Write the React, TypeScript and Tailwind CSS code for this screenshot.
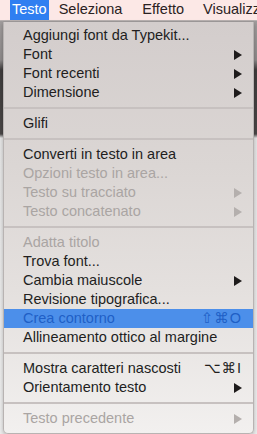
import React from "react";

type Item =
  | { kind: "sep" }
  | { kind: "item"; label: string; disabled?: boolean; sub?: boolean; shortcut?: string; active?: boolean };

const items: Item[] = [
  { kind: "item", label: "Aggiungi font da Typekit..." },
  { kind: "item", label: "Font", sub: true },
  { kind: "item", label: "Font recenti", sub: true },
  { kind: "item", label: "Dimensione", sub: true },
  { kind: "sep" },
  { kind: "item", label: "Glifi" },
  { kind: "sep" },
  { kind: "item", label: "Converti in testo in area" },
  { kind: "item", label: "Opzioni testo in area...", disabled: true },
  { kind: "item", label: "Testo su tracciato", disabled: true, sub: true },
  { kind: "item", label: "Testo concatenato", disabled: true, sub: true },
  { kind: "sep" },
  { kind: "item", label: "Adatta titolo", disabled: true },
  { kind: "item", label: "Trova font..." },
  { kind: "item", label: "Cambia maiuscole", sub: true },
  { kind: "item", label: "Revisione tipografica..." },
  { kind: "item", label: "Crea contorno", shortcut: "⇧⌘O", active: true },
  { kind: "item", label: "Allineamento ottico al margine" },
  { kind: "sep" },
  { kind: "item", label: "Mostra caratteri nascosti", shortcut: "⌥⌘I" },
  { kind: "item", label: "Orientamento testo", sub: true },
  { kind: "sep" },
  { kind: "item", label: "Testo precedente", disabled: true, sub: true },
];

const Arrow = ({ color }: { color: string }) => (
  <svg width="8" height="10" viewBox="0 0 8 10">
    <polygon points="0,0 8,5 0,10" fill={color} />
  </svg>
);

export default function App() {
  return (
    <div
      className="w-[257px] h-[434px] overflow-hidden flex flex-col bg-[linear-gradient(to_bottom,#a9a5a5_0px,#8e8a8a_60px,#3f3c3c_70px,#4a4747_134px,#e6e6e6_138px,#eeeeee_434px)]"
      style={{ fontFamily: '"Liberation Sans", "DejaVu Sans", Arial, sans-serif' }}
    >
      {/* menu bar */}
      <div className="h-[21px] shrink-0 flex items-center bg-[#fce8e6] border-b border-[#b9b2b1] text-[14.5px] text-[#2a2222]">
        <div className="ml-[10px] h-full px-[2px] w-[45px] flex items-center justify-center bg-[#2f7ff1] text-white">Testo</div>
        <div className="ml-[10px]">Seleziona</div>
        <div className="ml-[20px]">Effetto</div>
        <div className="ml-[19px] whitespace-nowrap">Visualizza</div>
      </div>

      {/* dropdown */}
      <div className="mx-[3px] mt-px flex-1 flex flex-col pt-[4px] pb-[4px] rounded-b-[5px] border-x border-b border-[#b8b3b2] bg-[linear-gradient(to_bottom,#d3cdcc,#dbd6d4_35%,#e4e0de_65%,#f2f0ef)] text-[14.5px] shadow-[0_2px_4px_rgba(0,0,0,0.25)]">
        {items.map((it, i) =>
          it.kind === "sep" ? (
            <div key={i} className="h-[12px] shrink-0 flex items-center">
              <div className="w-full h-[2px] bg-[#c7c1c0]" />
            </div>
          ) : (
            <div
              key={i}
              className={`h-[19px] shrink-0 flex items-center pl-[19px] pr-[11px] whitespace-nowrap ${
                it.active ? "bg-[#4c8fea] text-[#1f5fc6]" : it.disabled ? "text-[#aaa5a3]" : "text-[#221e1e]"
              }`}
            >
              <span className="flex-1">{it.label}</span>
              {it.shortcut && <span className="tracking-[1px]">{it.shortcut}</span>}
              {it.sub && <Arrow color={it.disabled ? "#b4afad" : "#1e1b1b"} />}
            </div>
          )
        )}
      </div>
    </div>
  );
}
